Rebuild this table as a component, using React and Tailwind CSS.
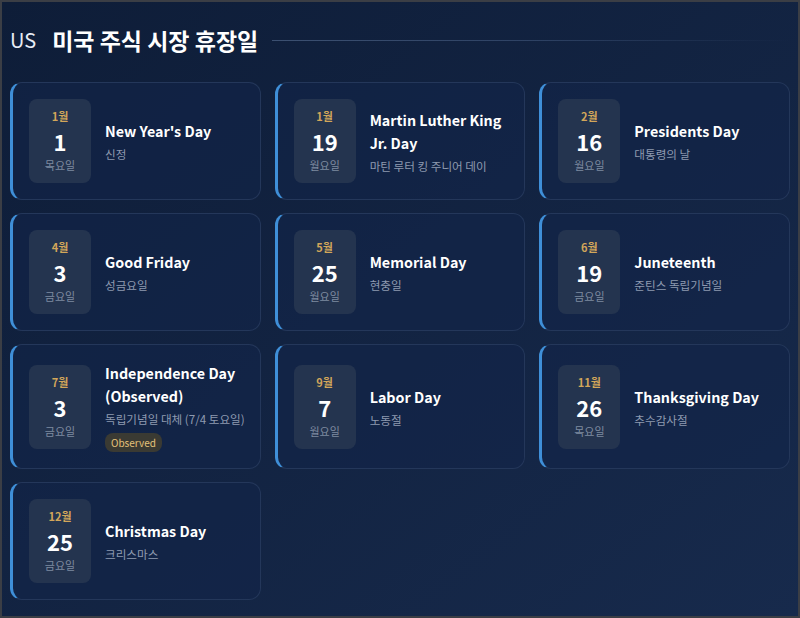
import React from 'react';

const holidays = [
  { month: '1월', day: '1', weekday: '목요일', name: "New Year's Day", ko: '신정' },
  { month: '1월', day: '19', weekday: '월요일', name: 'Martin Luther King Jr. Day', ko: '마틴 루터 킹 주니어 데이' },
  { month: '2월', day: '16', weekday: '월요일', name: 'Presidents Day', ko: '대통령의 날' },
  { month: '4월', day: '3', weekday: '금요일', name: 'Good Friday', ko: '성금요일' },
  { month: '5월', day: '25', weekday: '월요일', name: 'Memorial Day', ko: '현충일' },
  { month: '6월', day: '19', weekday: '금요일', name: 'Juneteenth', ko: '준틴스 독립기념일' },
  { month: '7월', day: '3', weekday: '금요일', name: 'Independence Day (Observed)', ko: '독립기념일 대체 (7/4 토요일)', observed: true },
  { month: '9월', day: '7', weekday: '월요일', name: 'Labor Day', ko: '노동절' },
  { month: '11월', day: '26', weekday: '목요일', name: 'Thanksgiving Day', ko: '추수감사절' },
  { month: '12월', day: '25', weekday: '금요일', name: 'Christmas Day', ko: '크리스마스' },
];

const HolidayCard = ({ h }) => (
  <div className="flex items-center gap-[14px] rounded-xl border border-[#24375a] border-l-[3px] border-l-[#3f8fd8] bg-[#12244a]/60 py-4 pl-4 pr-3">
    <div className="flex h-[84px] w-[62px] shrink-0 flex-col items-center justify-center rounded-lg bg-[#24344f]">
      <span className="text-[11px] font-bold leading-[19px] text-[#d2a65a]">{h.month}</span>
      <span className="text-[22px] font-bold leading-[30px] text-white">{h.day}</span>
      <span className="text-[11px] leading-[19px] text-[#7f8ba0]">{h.weekday}</span>
    </div>
    <div className="min-w-0">
      <p className="text-[14.3px] font-bold leading-[23px] text-white">{h.name}</p>
      <p className="mt-[3px] whitespace-nowrap text-[11.6px] leading-[18px] text-[#8e9ab0]">{h.ko}</p>
      {h.observed && (
        <span className="mt-[5px] inline-block rounded-lg bg-[#3a3a33] px-[6px] py-[2px] text-[10px] leading-[15px] text-[#e5c37a]">
          Observed
        </span>
      )}
    </div>
  </div>
);

const App = () => {
  return (
    <div
      className="min-h-screen h-[618px] border-2 border-[#3b3e45] bg-gradient-to-br from-[#0e1d38] to-[#172a4c] px-2 text-white"
      style={{ fontFamily: '"Noto Sans CJK KR", "Noto Sans", sans-serif' }}
    >
      <div className="flex h-[80px] items-center pb-[4px]">
        <span className="text-[20px] leading-none text-[#e8edf5]">US</span>
        <h1 className="ml-[16px] text-[23px] font-bold leading-none text-white">미국 주식 시장 휴장일</h1>
        <div className="ml-[14px] h-px flex-1 bg-gradient-to-r from-[#3c5071] via-[#2e4264] to-transparent"></div>
      </div>
      <div className="grid grid-cols-3 gap-x-[14px] gap-y-[13px]">
        {holidays.map((h, i) => (
          <HolidayCard key={i} h={h} />
        ))}
      </div>
    </div>
  );
};

export default App;
